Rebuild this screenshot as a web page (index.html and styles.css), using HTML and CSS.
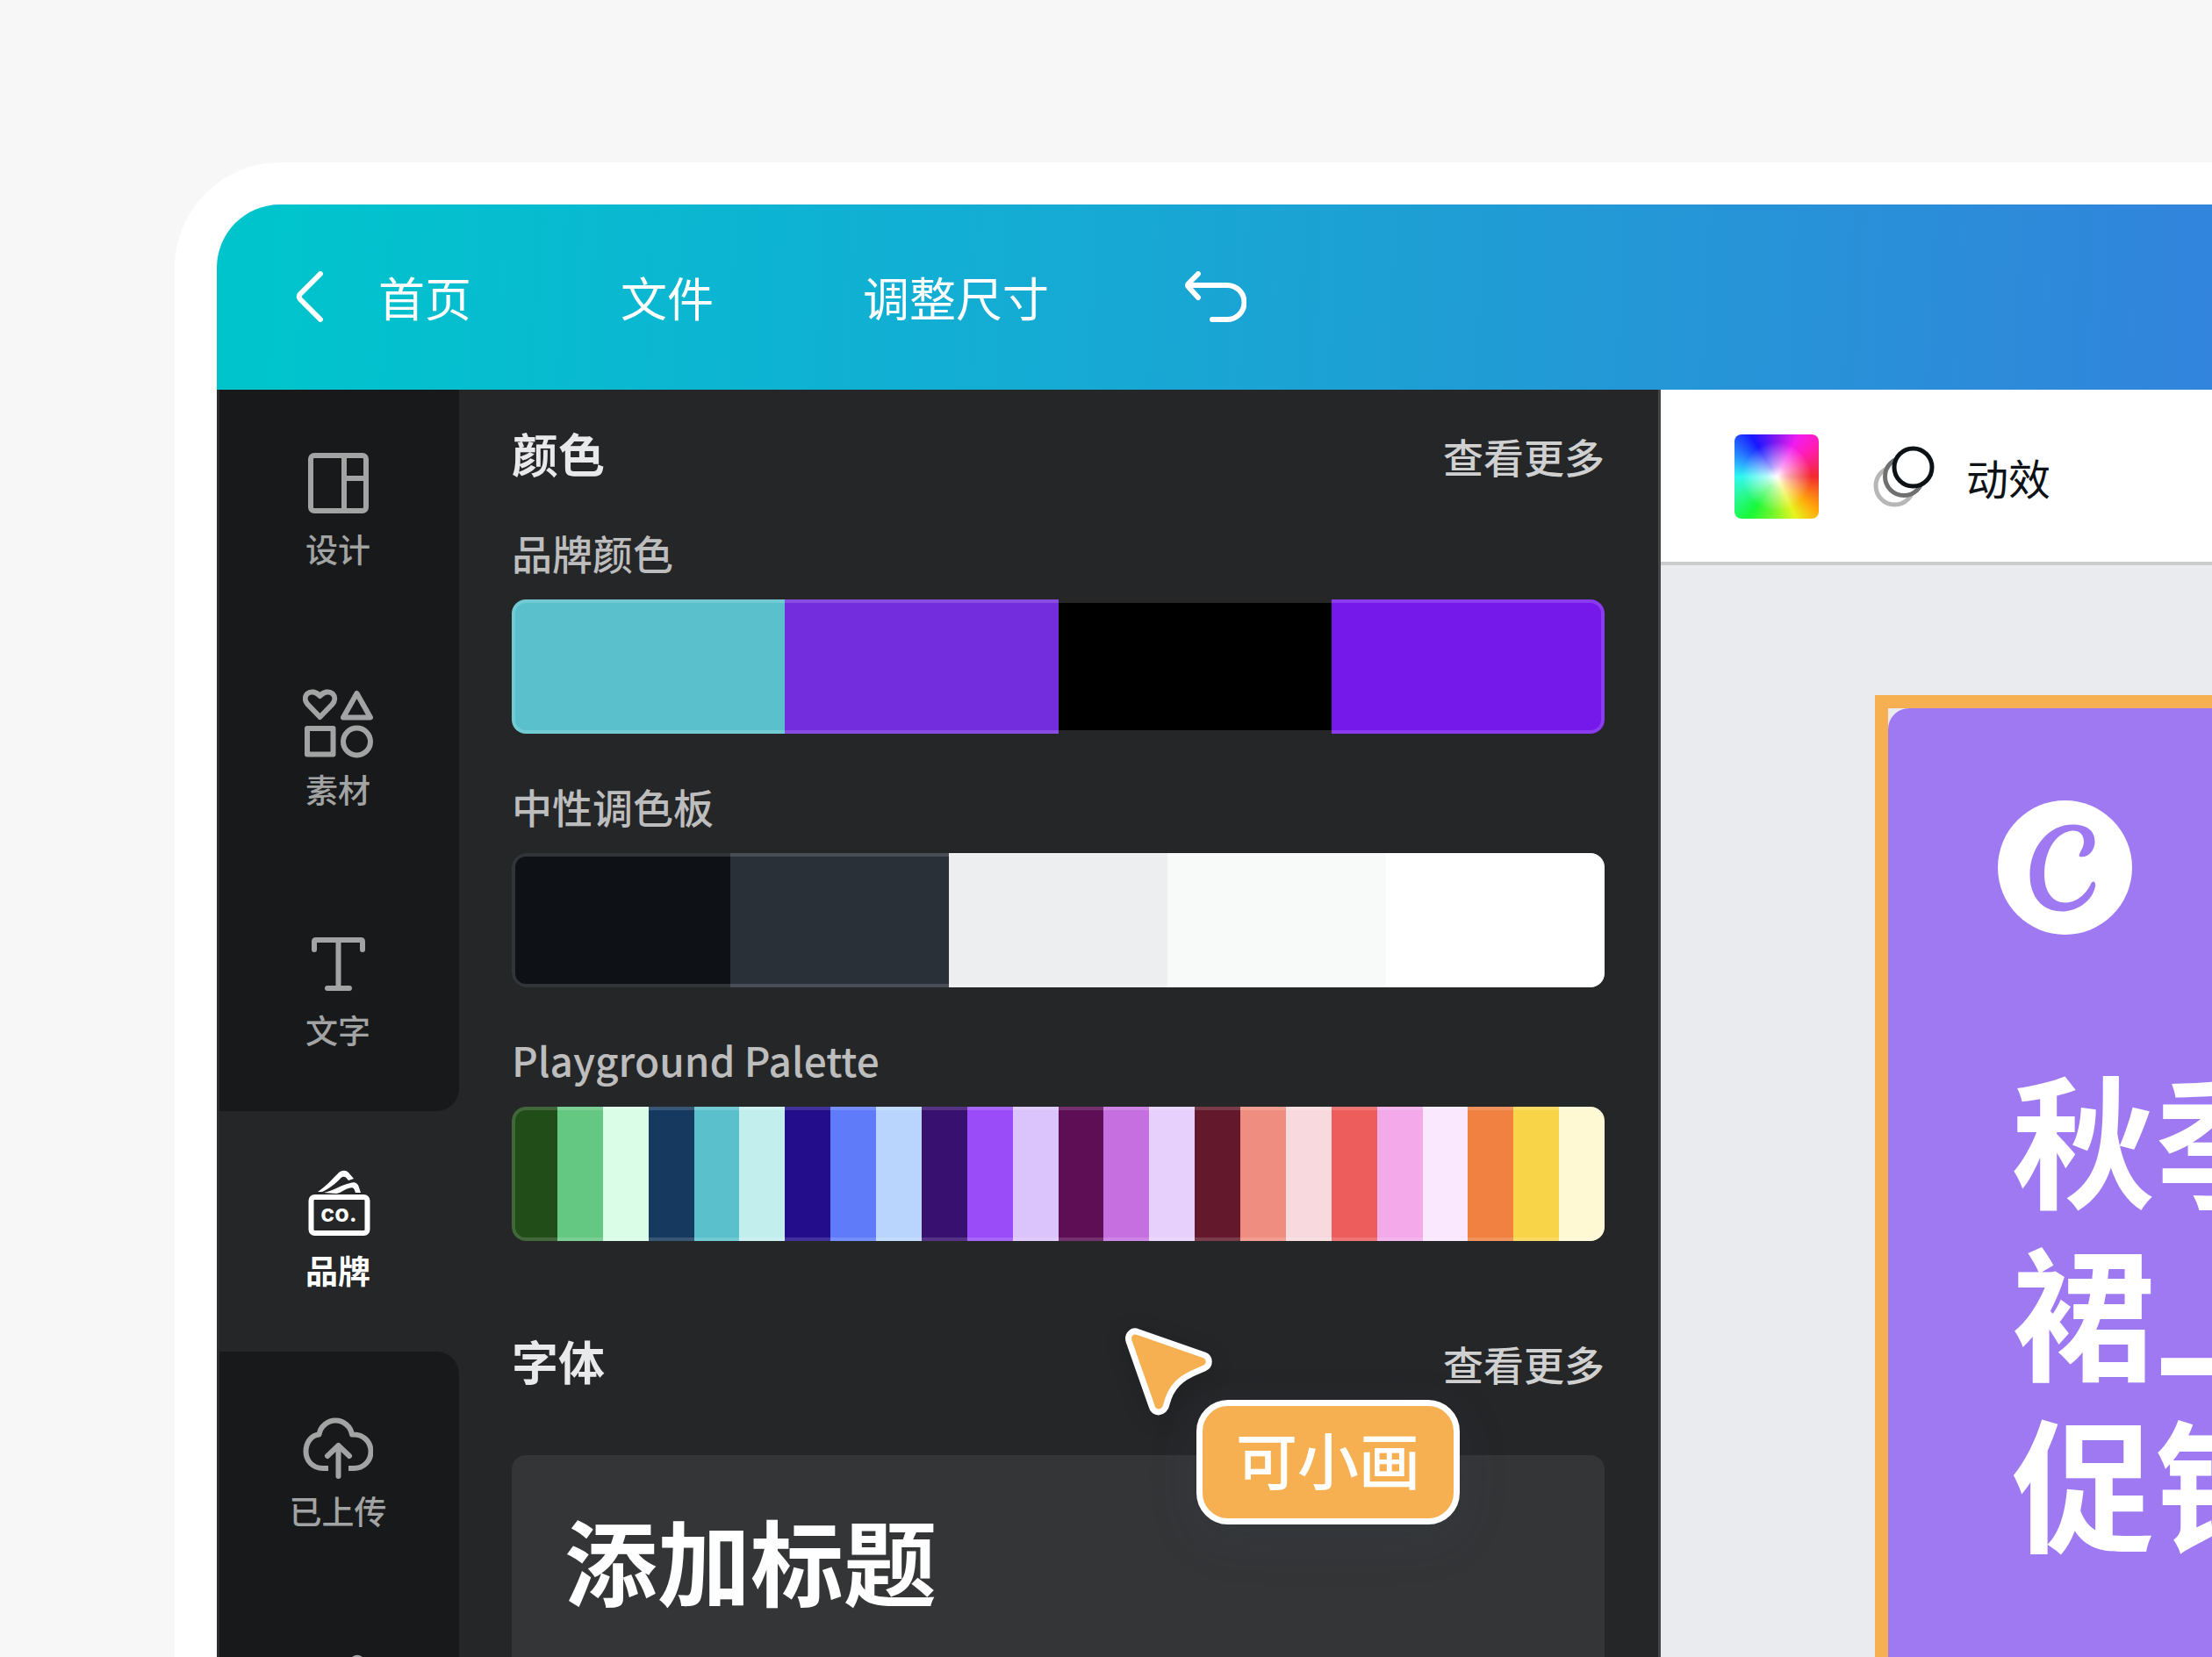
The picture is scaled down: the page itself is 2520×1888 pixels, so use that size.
FILE: index.html
```html
<!DOCTYPE html>
<html lang="zh-CN">
<head>
<meta charset="utf-8">
<title>品牌</title>
<link rel="stylesheet" href="styles.css">
</head>
<body>
<div class="frame">
  <div class="app">
    <header class="topbar">
      <a class="topbar-link topbar-home" href="#">
        <svg class="icon-back" viewBox="0 0 32 58" aria-hidden="true"><path d="M28 3 5 26Q2.500 29 5 32L28 55"/></svg>
        首页
      </a>
      <button class="topbar-link" type="button">文件</button>
      <button class="topbar-link" type="button">调整尺寸</button>
      <button class="topbar-undo" type="button" aria-label="撤销">
        <svg class="icon-undo" viewBox="0 0 70 58" aria-hidden="true"><path d="M15 3 4 14Q2 16 4 18L15 30M3 16H48a19.500 19.500 0 0 1 0 39H31"/></svg>
      </button>
    </header>

    <div class="workspace">
      <nav class="rail">
        <div class="rail-group rail-group-top">
          <button class="rail-item" type="button">
            <svg class="rail-icon" viewBox="0 0 80 80" aria-hidden="true"><rect x="9" y="9" width="63" height="63" rx="4"/><path d="M47 9v63M47 35h25"/></svg>
            设计
          </button>
          <button class="rail-item" type="button">
            <svg class="rail-icon" viewBox="0 0 80 80" aria-hidden="true"><path d="M19.500 33 5.500 18.500C2 14.500 2 9.500 5 6.500C9 3 15 4 19.500 9C24 4 30 3 34 6.500C37 9.500 37 14.500 33.500 18.500Z"/><path d="M61.500 6 77 33.500H46Z"/><rect x="5" y="46" width="29.500" height="29.500"/><circle cx="61.500" cy="61" r="15.500"/></svg>
            素材
          </button>
          <button class="rail-item" type="button">
            <svg class="rail-icon" viewBox="0 0 80 80" aria-hidden="true"><path d="M13 24V15Q13 13 15 13H66Q68 13 68 15V24M40.500 13V68M28 68H53"/></svg>
            文字
          </button>
        </div>
        <button class="rail-item rail-item-active" type="button">
          <svg class="rail-icon" viewBox="0 0 80 80" aria-hidden="true">
            <rect x="9.500" y="32" width="64" height="41" rx="4"/>
            <path class="solid" d="M17 26C26 20 34 11 41 4C45 1 49 1 52 4L58 11L52 13L49 9.500C47 8 45 8.500 43 10.500C37 17 29 23 22 26Z"/>
            <path class="solid" d="M24 27C34 25 44 18 54 16C60 14 63 17 64 21L66 27L60 27L58.500 23C57.500 21 55 21 52 22C46 24 42 28 38 28Z"/>
            <text class="rail-icon-text" x="41" y="60" text-anchor="middle">co.</text>
          </svg>
          品牌
        </button>
        <div class="rail-group rail-group-bottom">
          <button class="rail-item" type="button">
            <svg class="rail-icon" viewBox="0 0 80 80" aria-hidden="true"><path class="butt" d="M29 67H23C11 67 3.500 58 3.500 48C3.500 38 9 29.500 18.500 28.500A19 19 0 0 1 56 28.500C69 27.500 77.500 37 77.500 48C77.500 59 69 67 58 67H52"/><path d="M40.500 41V76M28 53 40.500 41 53 53"/></svg>
            已上传
          </button>
          <button class="rail-item" type="button" aria-label="绘图">
            <svg class="rail-icon" viewBox="0 0 80 80" aria-hidden="true"><path d="M8 74 14 54 56 12Q62 6 68 12T68 24L27 67Z"/></svg>
          </button>
        </div>
      </nav>

      <main class="panel">
        <div class="section-head">
          <h2 class="section-title">颜色</h2>
          <a class="more" href="#">查看更多</a>
        </div>
        <section class="palette">
          <h3 class="palette-name">品牌颜色</h3>
          <div class="swatches">
            <i style="background:#5ac1cc"></i><i style="background:#742ddd"></i><i style="background:#000000"></i><i style="background:#7519ea"></i>
          </div>
        </section>
        <section class="palette">
          <h3 class="palette-name">中性调色板</h3>
          <div class="swatches">
            <i style="background:#0e1217"></i><i style="background:#293038"></i><i style="background:#edeef0"></i><i style="background:#f8faf9"></i><i style="background:#ffffff"></i>
          </div>
        </section>
        <section class="palette">
          <h3 class="palette-name">Playground Palette</h3>
          <div class="swatches">
            <i style="background:#204d18"></i><i style="background:#64c782"></i><i style="background:#dafde8"></i><i style="background:#163a5f"></i><i style="background:#5ac1cc"></i><i style="background:#c3eeee"></i><i style="background:#230d8a"></i><i style="background:#5f7bfa"></i><i style="background:#b9d5fd"></i><i style="background:#371070"></i><i style="background:#994cf7"></i><i style="background:#dac4fb"></i><i style="background:#5d0e55"></i><i style="background:#c56fe0"></i><i style="background:#e8d0fc"></i><i style="background:#63192b"></i><i style="background:#f08d81"></i><i style="background:#f8d9dd"></i><i style="background:#ed5d5c"></i><i style="background:#f3a9ea"></i><i style="background:#fae8fe"></i><i style="background:#f08141"></i><i style="background:#f8d548"></i><i style="background:#fef8d3"></i>
          </div>
        </section>
        <div class="section-head section-head-fonts">
          <h2 class="section-title">字体</h2>
          <a class="more" href="#">查看更多</a>
        </div>
        <button class="font-card" type="button">添加标题</button>

        <svg class="cursor" viewBox="0 0 100 100" aria-hidden="true"><path d="M5 15C3 8 9 2 15 4.500L91 31C98 34 98 43 91 46L84 49C64 57 53 67 48 87C46 98 33 99 31 89Z"/></svg>
        <div class="cursor-name">可小画</div>
      </main>

      <div class="editor">
        <div class="toolbar">
          <button class="color-tile" type="button" aria-label="颜色"></button>
          <button class="animate" type="button">
            <svg class="icon-animate" viewBox="0 0 70 70" aria-hidden="true"><circle class="ring ring-far" cx="24.500" cy="45.500" r="21.500"/><circle class="ring ring-mid" cx="35" cy="35" r="21.500"/><circle class="ring ring-near" cx="45.500" cy="24.500" r="21.500"/></svg>
            动效
          </button>
        </div>
        <div class="canvas">
          <div class="selection">
            <article class="poster">
              <svg class="poster-logo" viewBox="0 0 153 153" aria-hidden="true"><circle cx="76.500" cy="76.500" r="76.500"/><path d="M93 64C91 61 98 55 98 47C98 39 93 34.500 86 34.500C67 35 53 57 53 84C53 104 62 116.500 77 116.500C90 116.500 101 106 106 95C108 91 112 92 111 98C108 114 91 126.500 73 126.500C50 126.500 36.500 109 36.500 85C36.500 52 59 27.500 85 27.500C101 27.500 110.500 34 110.500 47C110.500 58 102 66 93 64Z"/></svg>
              <h1 class="poster-title">秋季<br>裙上<br>促销</h1>
            </article>
          </div>
        </div>
      </div>
    </div>
  </div>
</div>
</body>
</html>
```
FILE: styles.css
```css
* {
  box-sizing: border-box;
}

body {
  margin: 0;
  background: #f7f7f7;
  font-family: "Noto Sans CJK SC", sans-serif;
  overflow: hidden;
}

button {
  margin: 0;
  padding: 0;
  border: 0;
  background: none;
  color: inherit;
  font: inherit;
}

a {
  color: inherit;
  text-decoration: none;
}

h1, h2, h3 {
  margin: 0;
}

svg {
  display: block;
  flex: none;
  fill: none;
  stroke: currentColor;
  stroke-width: 6px;
  stroke-linecap: round;
  stroke-linejoin: round;
}

.frame {
  height: calc(100vh - 185px);
  margin: 185px 0 0 199px;
  padding: 48px 0 0 48px;
  border-top-left-radius: 120px;
  background: #fff;
}

.app {
  display: flex;
  flex-direction: column;
  height: 100%;
  border-top-left-radius: 72px;
  overflow: hidden;
}

/* Top bar */

.topbar {
  display: flex;
  align-items: center;
  flex: none;
  height: 211px;
  padding: 0 0 2px 90px;
  background: linear-gradient(93deg, #00c4cc 3%, #0fb2d3 30%, #1e9fd4 60%, #3284dc 100%);
  color: #fff;
}

.topbar-link {
  margin-right: 170px;
  font-size: 53px;
  line-height: 80px;
}

.topbar-home {
  display: flex;
  align-items: center;
  gap: 62px;
}

.topbar-undo {
  margin-left: -15px;
}

.icon-back {
  width: 32px;
  height: 58px;
}

.icon-undo {
  width: 70px;
  height: 58px;
}

/* Workspace */

.workspace {
  display: grid;
  grid-template-columns: 276px 1369px minmax(0, 1fr);
  flex: 1;
  min-height: 0;
}

.rail {
  background: #252628;
}

.rail-group {
  background: #18191b;
}

.rail-group-top {
  border-bottom-right-radius: 26px;
}

.rail-group-bottom {
  border-top-right-radius: 26px;
}

.rail-item {
  display: flex;
  flex-direction: column;
  align-items: center;
  gap: 8px;
  width: 100%;
  height: 274px;
  padding-top: 66px;
  box-shadow: inset 3px 0 #2b2d2f;
  color: #a2a3a3;
  font-size: 37px;
  font-weight: 500;
  line-height: 54px;
}

.rail-item-active {
  color: #fff;
  font-weight: 700;
}

.rail-icon {
  width: 80px;
  height: 80px;
}

.rail-icon .solid {
  fill: currentColor;
  stroke: none;
}

.rail-icon .butt {
  stroke-linecap: butt;
}

.rail-icon-text {
  fill: currentColor;
  stroke: none;
  font: 700 27px Inter, sans-serif;
}

/* Brand panel */

.panel {
  position: relative;
  padding: 34px 61px 0 60px;
  border-right: 3px solid #444547;
  background: #252628;
}

.section-head {
  display: flex;
  align-items: flex-start;
  justify-content: space-between;
  margin-bottom: 39px;
}

.section-head-fonts {
  margin: 98px 0 64px;
}

.section-title {
  color: #e9e9eb;
  font-size: 53px;
  font-weight: 700;
  line-height: 76px;
}

.more {
  color: #d0d0d1;
  font-size: 46px;
  font-weight: 500;
  line-height: 82px;
}

.palette + .palette {
  margin-top: 52px;
}

.palette-name {
  margin-bottom: 24px;
  color: #bdbdbe;
  font-size: 46px;
  font-weight: 500;
  line-height: 60px;
}

.swatches {
  position: relative;
  display: flex;
  height: 153px;
  border-radius: 16px;
  overflow: hidden;
}

.swatches i {
  flex: 1;
}

.swatches::after {
  content: "";
  position: absolute;
  inset: 0;
  border: 4px solid rgba(255, 255, 255, 0.15);
  border-radius: 16px;
}

.font-card {
  display: flex;
  width: 100%;
  height: 280px;
  padding: 40px 60px 0;
  border-radius: 16px;
  background: #343537;
  color: #fff;
  font-size: 106px;
  font-weight: 700;
  line-height: 156px;
}

.cursor {
  position: absolute;
  left: 758px;
  top: 1069px;
  width: 100px;
  height: 100px;
  fill: #f6b052;
  stroke: #fff;
  stroke-width: 7px;
  filter: drop-shadow(0 4px 12px rgba(0, 0, 0, 0.15));
}

.cursor-name {
  position: absolute;
  left: 840px;
  top: 1151px;
  padding: 12px 38px 20px;
  border: 7px solid #fff;
  border-radius: 36px;
  background: #f6b052;
  box-shadow: 0 16px 56px rgba(57, 76, 96, 0.15);
  color: #fff;
  font-size: 70px;
  font-weight: 500;
  line-height: 96px;
}

/* Editor */

.editor {
  display: flex;
  flex-direction: column;
  min-width: 0;
}

.toolbar {
  display: flex;
  align-items: center;
  flex: none;
  gap: 62px;
  height: 200px;
  padding: 2px 0 0 84px;
  border-bottom: 4px solid #cccccd;
  background: #fff;
}

.color-tile {
  width: 96px;
  height: 96px;
  border-radius: 8px;
  background:
    radial-gradient(circle, #fff 0%, rgba(255, 255, 255, 0.6) 18%, rgba(255, 255, 255, 0) 58%),
    conic-gradient(#8618ee, #f01cf0 28deg, #ff1cb8 50deg, #f22a30 90deg, #ffac0a 132deg, #e6f520 155deg, #86f52a 180deg, #18f838 215deg, #2cf8a0 245deg, #30f8f0 270deg, #2a98ff 295deg, #1818ff 328deg, #8618ee);
}

.animate {
  display: flex;
  align-items: center;
  gap: 36px;
  color: #0d1217;
  font-size: 48px;
  line-height: 66px;
}

.icon-animate {
  width: 70px;
  height: 70px;
}

.ring {
  fill: #fff;
  stroke-width: 5px;
}

.ring-far {
  stroke: #b7b7b7;
}

.ring-mid {
  stroke: #707070;
}

.canvas {
  display: flex;
  flex: 1;
  padding: 148px 0 0 244px;
  background: #eaebef;
}

.selection {
  flex: 1;
  border: 15px solid #f6b052;
  border-width: 15px 0 0 15px;
}

.poster {
  height: 100%;
  padding: 105px 0 0 125px;
  border-top-left-radius: 24px;
  background: #9f79f2;
  color: #fff;
}

.poster-logo {
  width: 153px;
  height: 153px;
  fill: #fff;
  stroke: none;
}

.poster-logo path {
  fill: #9f79f2;
}

.poster-title {
  margin: 130px 0 0 16px;
  font-size: 163px;
  font-weight: 700;
  line-height: 196px;
  white-space: nowrap;
}
```
